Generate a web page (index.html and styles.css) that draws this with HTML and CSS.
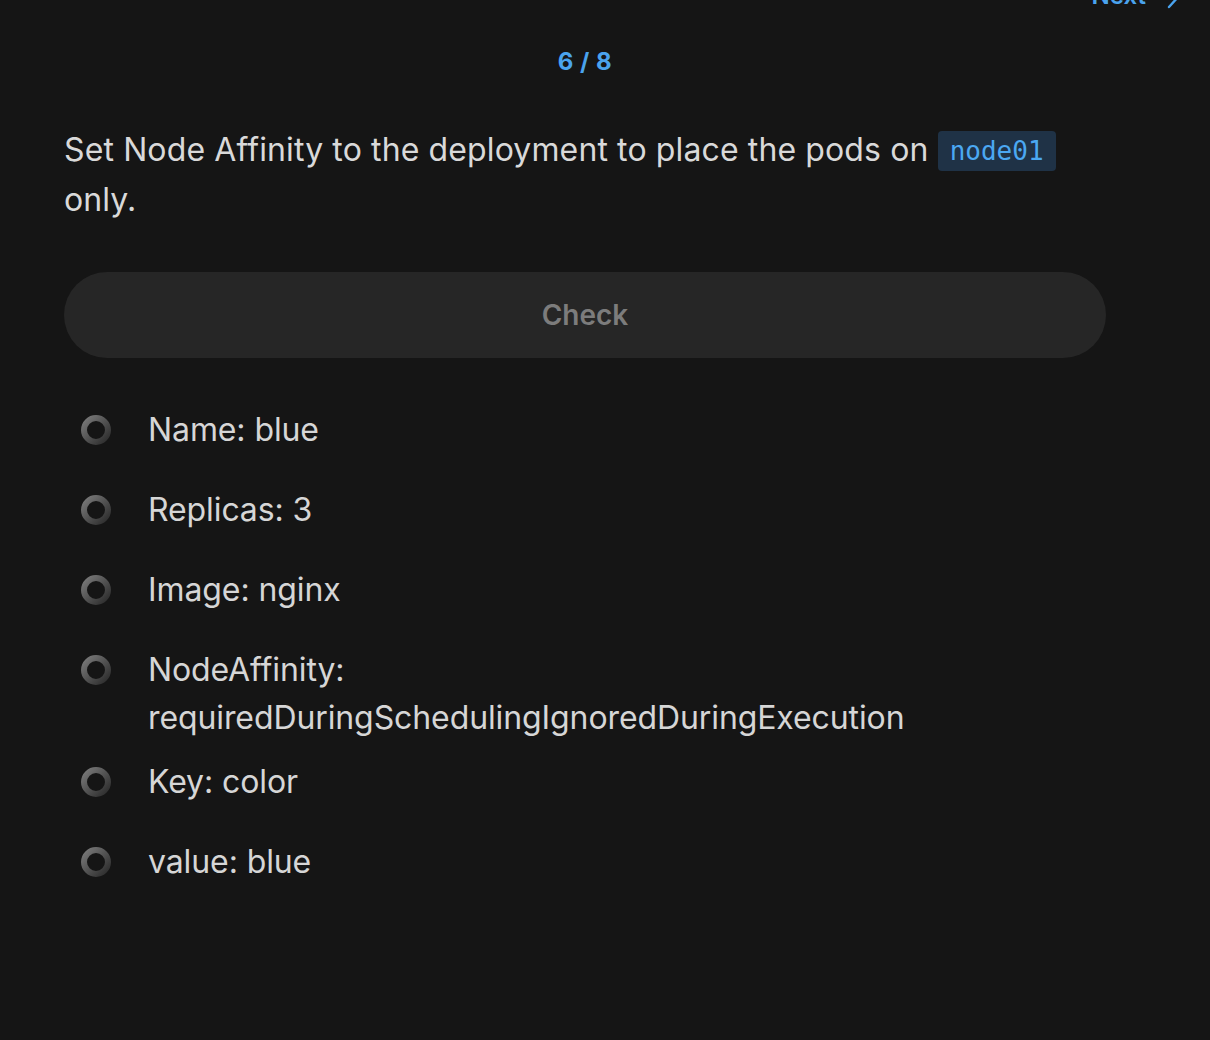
FILE: index.html
```html
<!DOCTYPE html>
<html lang="en">
<head>
<meta charset="utf-8">
<title>Task 6 / 8</title>
<link rel="stylesheet" href="styles.css">
</head>
<body>
<div class="topbar">
  <a class="next" href="#">Next
    <svg class="chev" width="16" height="28" viewBox="0 0 16 28"><path d="M3 3 L13 14 L3 25" fill="none" stroke="currentColor" stroke-width="2.4" stroke-linecap="round" stroke-linejoin="round"/></svg>
  </a>
</div>
<main class="main">
  <div class="counter">6 / 8</div>
  <p class="prompt">Set Node Affinity to the deployment to place the pods on <code class="code">node01</code> only.</p>
  <button class="check">Check</button>
  <ul class="list">
    <li class="item"><span class="ring"><svg width="30" height="30" viewBox="0 0 30 30"><use href="#r"/></svg></span><span class="label">Name: blue</span></li>
    <li class="item"><span class="ring"><svg width="30" height="30" viewBox="0 0 30 30"><use href="#r"/></svg></span><span class="label">Replicas: 3</span></li>
    <li class="item"><span class="ring"><svg width="30" height="30" viewBox="0 0 30 30"><use href="#r"/></svg></span><span class="label">Image: nginx</span></li>
    <li class="item"><span class="ring"><svg width="30" height="30" viewBox="0 0 30 30"><use href="#r"/></svg></span><span class="label">NodeAffinity: requiredDuringSchedulingIgnoredDuringExecution</span></li>
    <li class="item"><span class="ring"><svg width="30" height="30" viewBox="0 0 30 30"><use href="#r"/></svg></span><span class="label">Key: color</span></li>
    <li class="item"><span class="ring"><svg width="30" height="30" viewBox="0 0 30 30"><use href="#r"/></svg></span><span class="label">value: blue</span></li>
  </ul>
</main>
<svg width="0" height="0" class="defs">
  <defs>
    <linearGradient id="g" x1="0" y1="0" x2="1" y2="1">
      <stop offset="0" stop-color="#7a7a7a"/>
      <stop offset="1" stop-color="#2c2c2c"/>
    </linearGradient>
    <circle id="r" cx="15" cy="15" r="12" fill="none" stroke="url(#g)" stroke-width="6"/>
  </defs>
</svg>
</body>
</html>
```
FILE: styles.css
```css
html, body {
  margin: 0;
  padding: 0;
  background: #151515;
}
body {
  font-family: Inter, "Noto Sans", "Liberation Sans", sans-serif;
  color: #d6d6d6;
  width: 1210px;
  height: 1040px;
  overflow: hidden;
}
.topbar {
  display: flex;
  justify-content: flex-end;
  height: 30px;
  margin-top: -19px;
  padding-right: 28px;
}
.next {
  display: flex;
  align-items: center;
  gap: 20px;
  color: #4aa3ee;
  text-decoration: none;
  font-size: 24px;
  font-weight: 600;
  line-height: 30px;
}
.chev {
  display: block;
}
.main {
  padding: 0 104px 0 64px;
}
.counter {
  margin-top: 36px;
  text-align: center;
  font-size: 24px;
  line-height: 30px;
  font-weight: 700;
  color: #4aa3ee;
  letter-spacing: 0.5px;
}
.prompt {
  margin: 48px 0 0;
  font-size: 32px;
  line-height: 50px;
  letter-spacing: 0.12px;
  color: #d9d9d9;
}
.code {
  display: inline-block;
  font-family: "DejaVu Sans Mono", "Liberation Mono", monospace;
  font-size: 26px;
  line-height: 40px;
  letter-spacing: 0;
  padding: 0 12px;
  background: #1f3246;
  color: #4ba8f2;
  border-radius: 4px;
  vertical-align: 1px;
}
.check {
  display: block;
  width: 100%;
  height: 86px;
  margin-top: 47px;
  border: none;
  border-radius: 43px;
  background: #262626;
  color: #7c7c7c;
  font-family: Inter, "Noto Sans", sans-serif;
  font-size: 28px;
  font-weight: 600;
}
.list {
  list-style: none;
  margin: 48px 0 0;
  padding: 0;
  display: flex;
  flex-direction: column;
  gap: 16px;
}
.item {
  display: flex;
  align-items: flex-start;
  min-height: 64px;
  padding-left: 17px;
  gap: 37px;
  font-size: 32px;
  line-height: 48px;
  letter-spacing: -0.1px;
}
.ring {
  flex: none;
  display: block;
  width: 30px;
  height: 30px;
  margin-top: 9px;
}
.ring svg {
  display: block;
}
.label {
  color: #d6d6d6;
}
.defs {
  position: absolute;
}
```
